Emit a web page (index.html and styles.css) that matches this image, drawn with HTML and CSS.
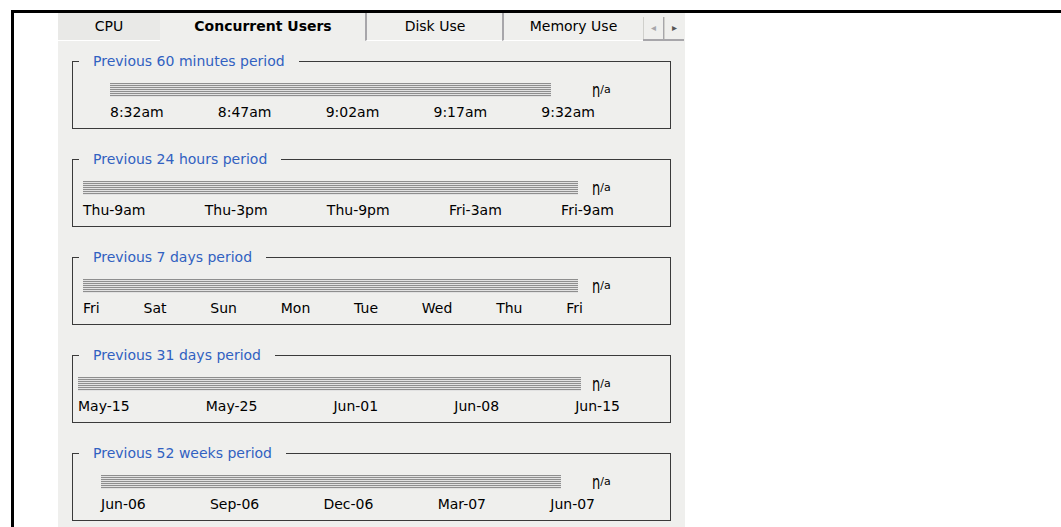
FILE: index.html
```html
<!DOCTYPE html>
<html lang="en">
<head>
    <meta charset="UTF-8">
    <title>Statistics</title>
    <link rel="stylesheet" href="styles.css">
</head>
<body>
    <div class="frame">
        <div class="panel">
            <div class="tabs">
                <div class="tab tab-cpu">CPU</div>
                <div class="tab tab-users active">Concurrent Users</div>
                <div class="tab tab-disk">Disk Use</div>
                <div class="tab tab-mem">Memory Use</div>
                <div class="scroller">
                    <span class="arrow arrow-left">&#9666;</span>
                    <span class="arrow arrow-right">&#9656;</span>
                </div>
            </div>

            <fieldset class="period p60">
                <legend>Previous 60 minutes period</legend>
                <div class="chart">
                    <div class="bar"></div>
                    <div class="na"><span class="n">n</span><sup>/a</sup></div>
                </div>
                <div class="labels">
                    <span>8:32am</span><span>8:47am</span><span>9:02am</span><span>9:17am</span><span>9:32am</span>
                </div>
            </fieldset>

            <fieldset class="period p24">
                <legend>Previous 24 hours period</legend>
                <div class="chart">
                    <div class="bar"></div>
                    <div class="na"><span class="n">n</span><sup>/a</sup></div>
                </div>
                <div class="labels">
                    <span>Thu-9am</span><span>Thu-3pm</span><span>Thu-9pm</span><span>Fri-3am</span><span>Fri-9am</span>
                </div>
            </fieldset>

            <fieldset class="period p7">
                <legend>Previous 7 days period</legend>
                <div class="chart">
                    <div class="bar"></div>
                    <div class="na"><span class="n">n</span><sup>/a</sup></div>
                </div>
                <div class="labels">
                    <span>Fri</span><span>Sat</span><span>Sun</span><span>Mon</span><span>Tue</span><span>Wed</span><span>Thu</span><span>Fri</span>
                </div>
            </fieldset>

            <fieldset class="period p31">
                <legend>Previous 31 days period</legend>
                <div class="chart">
                    <div class="bar"></div>
                    <div class="na"><span class="n">n</span><sup>/a</sup></div>
                </div>
                <div class="labels">
                    <span>May-15</span><span>May-25</span><span>Jun-01</span><span>Jun-08</span><span>Jun-15</span>
                </div>
            </fieldset>

            <fieldset class="period p52">
                <legend>Previous 52 weeks period</legend>
                <div class="chart">
                    <div class="bar"></div>
                    <div class="na"><span class="n">n</span><sup>/a</sup></div>
                </div>
                <div class="labels">
                    <span>Jun-06</span><span>Sep-06</span><span>Dec-06</span><span>Mar-07</span><span>Jun-07</span>
                </div>
            </fieldset>
        </div>
    </div>
</body>
</html>
```

FILE: styles.css
```css
/* Ventana de estadisticas, estilo XP */
html, body {
    margin: 0;
    height: 100%;
    background: #fff;
}
body {
    font-family: "DejaVu Sans", Verdana, sans-serif;
    font-size: 14px;
    color: #000;
    overflow: hidden;
}
.frame {
    margin: 10px 0 0 11px;
    height: 517px;
    border-top: 3px solid #000;
    border-left: 3px solid #000;
}
.panel {
    margin-left: 44px;
    width: 627px;
    height: 100%;
    background-color: #efefed;
    overflow: hidden;
}

/* pestanas */
.tabs {
    display: flex;
    height: 28px;
    white-space: nowrap;
}
.tab {
    flex: none;
    height: 27px;
    line-height: 26px;
    text-align: center;
    border-bottom: 1px solid #fff;
    box-sizing: content-box;
}
.tab-cpu {
    width: 102px;
    background-color: #e9e9e7;
}
.tab-users {
    width: 206px;
    font-weight: bold;
    border-bottom-color: transparent;
}
.tab-disk {
    width: 136px;
    border-left: 2px solid #a7a6aa;
    margin-left: -1px;
}
.tab-mem {
    width: 139px;
    border-left: 2px solid #a7a6aa;
    margin-left: -1px;
    overflow: hidden;
}
.scroller {
    flex: none;
    display: flex;
    margin-top: 4px;
    height: 22px;
    border-bottom: 2px solid #a7a6aa;
}
.arrow {
    width: 19px;
    text-align: center;
    line-height: 22px;
    font-size: 10px;
    border-left: 1px solid #d0d0cc;
}
.arrow-left {
    color: #a7a6aa;
    border-right: 1px solid #a7a6aa;
}
.arrow-right {
    color: #555;
}

/* periodos */
.period {
    margin: 13px 14px 23px 14px;
    padding: 0 0 9px 0;
    border: 1px solid #3a3a3a;
    min-width: 0;
}
.period legend {
    margin-left: 6px;
    padding: 0 14px;
    color: #3161c1;
    line-height: 14px;
}
.chart {
    display: grid;
    grid-template-columns: 519px auto;
    align-items: start;
    height: 14px;
    margin-top: 15px;
}
.bar {
    height: 14px;
    background: repeating-linear-gradient(to bottom, #8e8e8e 0, #8e8e8e 1px, #e2e2e2 1px, #e2e2e2 2px);
}
.na {
    height: 14px;
    font-size: 13px;
    line-height: 14px;
    white-space: nowrap;
}
.na .n {
    display: inline-block;
    transform: scale(1, 1.45);
    transform-origin: 50% 100%;
}
.na sup {
    font-size: 11px;
    vertical-align: 5px;
}
.labels {
    display: flex;
    justify-content: space-between;
    margin-top: 8px;
    line-height: 14px;
}

.p60 .bar { margin-left: 37px; width: 441px; }
.p60 .labels { margin-left: 37px; width: 485px; }
.p24 .bar { margin-left: 10px; width: 495px; }
.p24 .labels { margin-left: 10px; width: 531px; }
.p7 .bar { margin-left: 10px; width: 495px; }
.p7 .labels { margin-left: 10px; width: 500px; }
.p31 .bar { margin-left: 5px; width: 503px; }
.p31 .labels { margin-left: 5px; width: 542px; }
.p52 .bar { margin-left: 28px; width: 460px; }
.p52 .labels { margin-left: 28px; width: 494px; }
```
